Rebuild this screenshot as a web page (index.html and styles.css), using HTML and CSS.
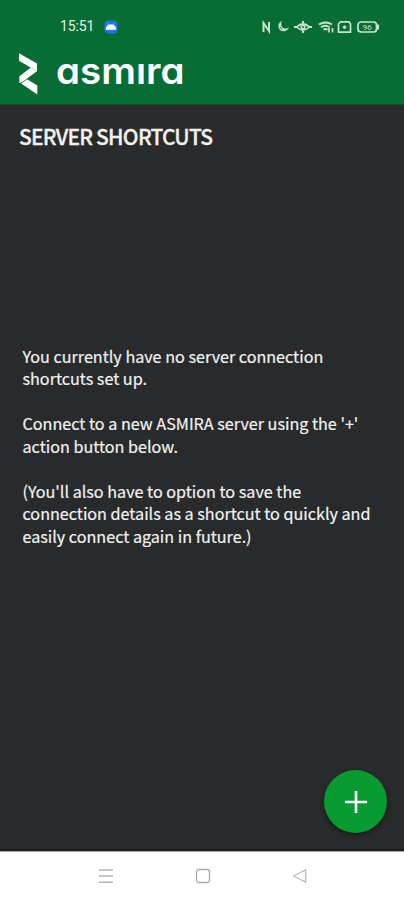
FILE: index.html
```html
<!DOCTYPE html>
<html lang="en">
<head>
    <meta charset="UTF-8">
    <meta name="viewport" content="width=device-width, initial-scale=1.0">
    <title>Asmira</title>
    <link rel="stylesheet" href="styles.css">
</head>
<body>

    <header class="app-header">
        <div class="status-bar">
            <span class="clock">15:51</span>
            <svg class="notification" width="14" height="14" viewBox="0 0 14 14">
                <rect x=".5" y=".5" width="13" height="13" rx="4" fill="#1976e8" />
                <path d="M2 9.500C2.300 6 4 4.800 7 4.800S11.700 6 12 9.500ZM3.800 3.500l1 1.500M10.200 3.500L9.200 5" fill="#fff" stroke="#fff" stroke-width=".6" />
            </svg>
            <svg class="status-icons" width="118" height="14" viewBox="0 0 118 14" fill="none" stroke="#c9e2ce" stroke-width="1.700">
                <!-- nfc -->
                <path d="M2.500 12V3L8 11V2" stroke-width="2" />
                <!-- do not disturb -->
                <path d="M19.500 2.800a4.500 4.500 0 1 0 6.500 6.200c-4 1.200-7-2-6.500-6.200Z" stroke-width="1.500" />
                <!-- eye comfort -->
                <path d="M35.500 7Q42 1 48.500 7Q42 13 35.500 7Z" />
                <circle cx="42" cy="7" r="1.800" />
                <path d="M33 7h3M48 7h3M42 1v2M42 11v2" stroke-width="2" />
                <!-- wifi -->
                <path d="M58 4.500q6.500-4 13 0M60 7.200q4.300-3 8.600 0M62.500 9.700q2-1.500 4 0" stroke-width="2" />
                <path d="M68 8v4.500M71.500 12.500V8" stroke-width="1.700" />
                <!-- sim -->
                <path d="M79.500 1.800h8.500L89.500 4v8.200H77.500V4Z" stroke-linejoin="round" />
                <path d="M83.500 5.500v3.500M81.800 7.200h3.500" stroke-width="1.800" />
                <!-- battery -->
                <rect x="97" y="2" width="18.500" height="10" rx="3" />
                <path d="M117 4.500v5" stroke-width="2" />
                <text class="battery-level" x="106.200" y="9.800" text-anchor="middle">96</text>
            </svg>
        </div>
        <div class="brand">
            <svg class="brand-mark" width="19" height="42" viewBox="0 0 19 42" fill="#fff">
                <path d="M0 .3L18 10.500V18.300L0 7.700Z" />
                <path d="M11.500 14.800L18 18.300L3.500 28.800L.3 30V23.500Z" />
                <path d="M2.200 30.500L8.200 26.200L18.300 32.500V41.500Z" />
            </svg>
            <svg class="brand-name" width="132" height="50" viewBox="0 0 132 50">
                <text x="-1" y="37" textLength="128.500" lengthAdjust="spacingAndGlyphs" aria-label="asmira">asmıra</text>
            </svg>
        </div>
    </header>

    <main class="shortcuts">
        <h1>SERVER SHORTCUTS</h1>
        <div class="empty-message">
            <p>You currently have no server connection<br>shortcuts set up.</p>
            <p>Connect to a new ASMIRA server using the '+'<br>action button below.</p>
            <p>(You'll also have to option to save the<br>connection details as a shortcut to quickly and<br>easily connect again in future.)</p>
        </div>
        <button class="add-button" type="button" aria-label="Add server">
            <svg width="24" height="24" viewBox="0 0 24 24" stroke="#fff" stroke-width="2.600">
                <path d="M12 1v22M1 12h22" />
            </svg>
        </button>
    </main>

    <nav class="nav-bar">
        <svg width="16" height="16" viewBox="0 0 16 16" fill="none" stroke="#b4b4b4" stroke-width="1.500">
            <path d="M1 2h14M1 8h14M1 14.300h14" />
        </svg>
        <svg width="16" height="16" viewBox="0 0 16 16" fill="none" stroke="#aaa" stroke-width="1.300">
            <rect x="1.500" y="1.500" width="13" height="13" rx="2.500" />
        </svg>
        <svg width="16" height="16" viewBox="0 0 16 16" fill="none" stroke="#b4b4b4" stroke-width="1.200" stroke-linejoin="round">
            <path d="M1.500 8L13.800 1.800V14.200Z" />
        </svg>
    </nav>

</body>
</html>
```

FILE: styles.css
```css
* {
    margin: 0;
    padding: 0;
    box-sizing: border-box;
}

body {
    display: flex;
    flex-direction: column;
    height: 900px;
    background-color: #282a2b;
    color: #f1f1f1;
    font-family: "Noto Sans CJK SC", "Noto Sans", sans-serif;
}

/* Header */
.app-header {
    height: 105px;
    padding-top: 19px;
    background-color: #086c35;
    border-bottom: 1px solid #1c4a30;
}

.status-bar {
    display: flex;
    align-items: center;
    height: 15px;
    padding-left: 60px;
}

.clock {
    width: 44px;
    font-family: Roboto, sans-serif;
    font-size: 14px;
    line-height: 15px;
    letter-spacing: -0.1px;
    color: #e4f0e6;
}

.status-icons {
    margin-left: 143px;
}

.battery-level {
    font-family: Roboto, sans-serif;
    font-size: 8px;
    fill: #c9e2ce;
    stroke: none;
}

.brand {
    display: flex;
    align-items: flex-start;
    padding: 19px 0 0 19px;
}

.brand-name {
    margin: -6px 0 0 19px;
    overflow: visible;
    font-family: Inter, sans-serif;
    font-size: 37px;
    font-weight: 600;
    font-feature-settings: "cv11", "ss03";
    fill: #fff;
}

/* Shortcut list, empty */
.shortcuts {
    position: relative;
    flex: 1;
    border-bottom: 2px solid #1b1c1d;
}

h1 {
    padding: 17px 19px 0;
    font-size: 21px;
    line-height: 28px;
    font-weight: 500;
    letter-spacing: -0.8px;
    -webkit-text-stroke: 0.3px #f1f1f1;
}

.empty-message {
    padding: 194.5px 22.5px 0;
    font-size: 16.15px;
    line-height: 22.5px;
    -webkit-text-stroke: 0.2px #f1f1f1;
}

.empty-message p {
    margin-bottom: 22.5px;
    white-space: nowrap;
}

.add-button {
    position: absolute;
    right: 17px;
    bottom: 16px;
    display: flex;
    align-items: center;
    justify-content: center;
    width: 63px;
    height: 63px;
    border: none;
    border-radius: 50%;
    background-color: #089b32;
    box-shadow: 0 2px 5px rgba(0, 0, 0, 0.4);
    cursor: pointer;
}

/* System navigation */
.nav-bar {
    display: flex;
    align-items: center;
    justify-content: center;
    gap: 81px;
    height: 49px;
    padding-left: 1px;
    background-color: #fff;
    border-top: 1px solid #aaa;
}
```
